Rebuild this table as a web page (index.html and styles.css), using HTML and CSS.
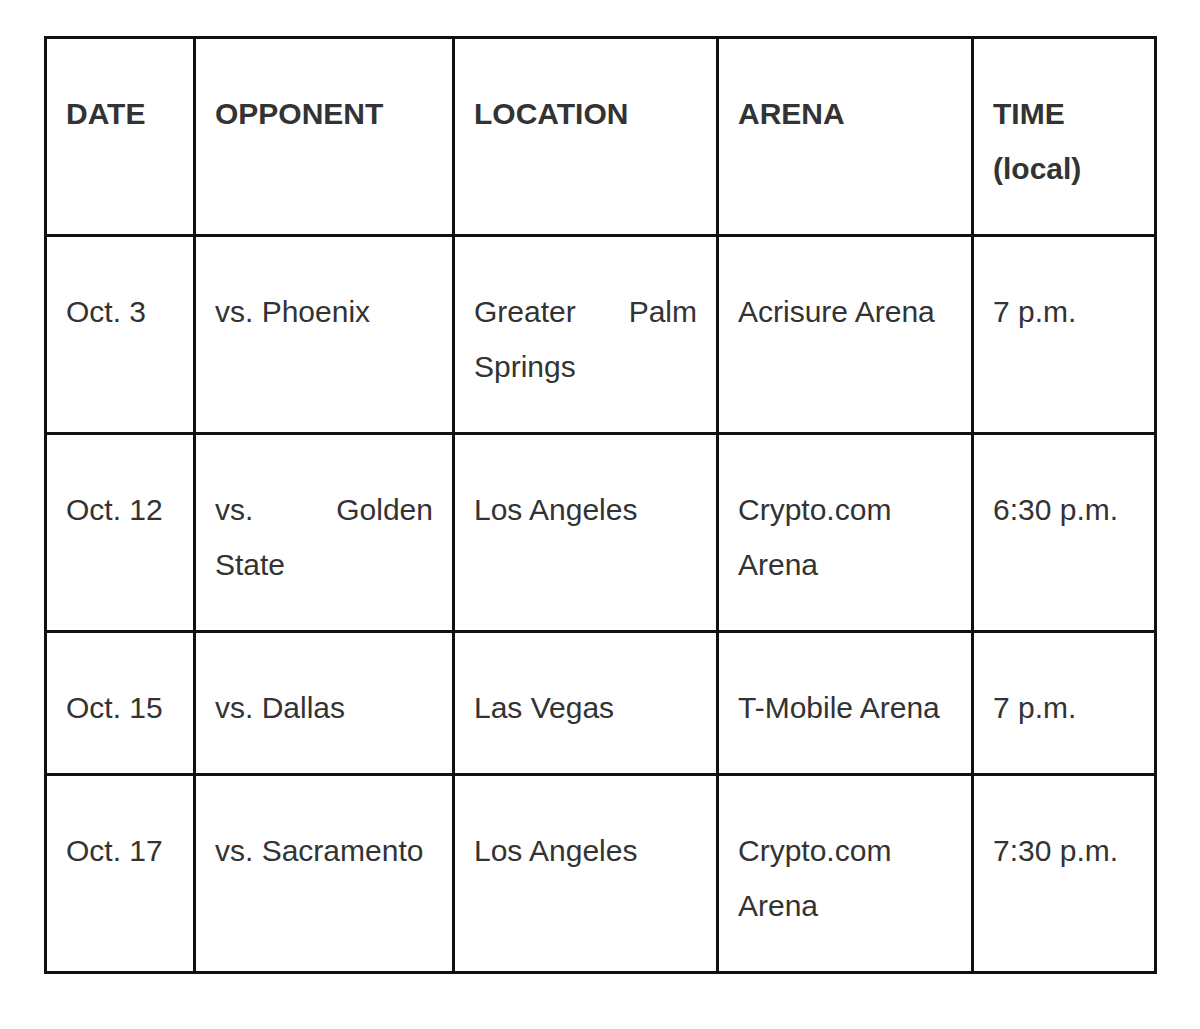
FILE: index.html
```html
<!DOCTYPE html>
<html lang="en">
<head>
<meta charset="utf-8">
<title>Schedule</title>
<link rel="stylesheet" href="styles.css">
</head>
<body>
<table class="schedule">
  <colgroup>
    <col class="c-date">
    <col class="c-opp">
    <col class="c-loc">
    <col class="c-arena">
    <col class="c-time">
  </colgroup>
  <thead>
    <tr>
      <th>DATE</th>
      <th>OPPONENT</th>
      <th>LOCATION</th>
      <th>ARENA</th>
      <th>TIME (local)</th>
    </tr>
  </thead>
  <tbody>
    <tr>
      <td>Oct. 3</td>
      <td>vs. Phoenix</td>
      <td>Greater Palm Springs</td>
      <td>Acrisure Arena</td>
      <td>7 p.m.</td>
    </tr>
    <tr>
      <td>Oct. 12</td>
      <td>vs. Golden State</td>
      <td>Los Angeles</td>
      <td>Crypto.com Arena</td>
      <td>6:30 p.m.</td>
    </tr>
    <tr>
      <td>Oct. 15</td>
      <td>vs. Dallas</td>
      <td>Las Vegas</td>
      <td>T-Mobile Arena</td>
      <td>7 p.m.</td>
    </tr>
    <tr>
      <td>Oct. 17</td>
      <td>vs. Sacramento</td>
      <td>Los Angeles</td>
      <td>Crypto.com Arena</td>
      <td>7:30 p.m.</td>
    </tr>
  </tbody>
</table>
</body>
</html>
```
FILE: styles.css
```css
html, body {
  margin: 0;
  background: #ffffff;
}
body {
  padding: 36px 44px;
  font-family: "Liberation Sans", Arial, Helvetica, sans-serif;
  font-size: 30px;
  line-height: 55px;
  color: #333333;
}
.schedule {
  border-collapse: collapse;
  table-layout: fixed;
  width: 1110px;
}
.c-date { width: 149px; }
.c-opp { width: 259px; }
.c-loc { width: 264px; }
.c-arena { width: 255px; }
.c-time { width: 183px; }
.schedule th,
.schedule td {
  border: 3px solid #111111;
  padding: 47px 19px 38px 19px;
  vertical-align: top;
  text-align: justify;
}
.schedule th {
  font-weight: bold;
}
```
